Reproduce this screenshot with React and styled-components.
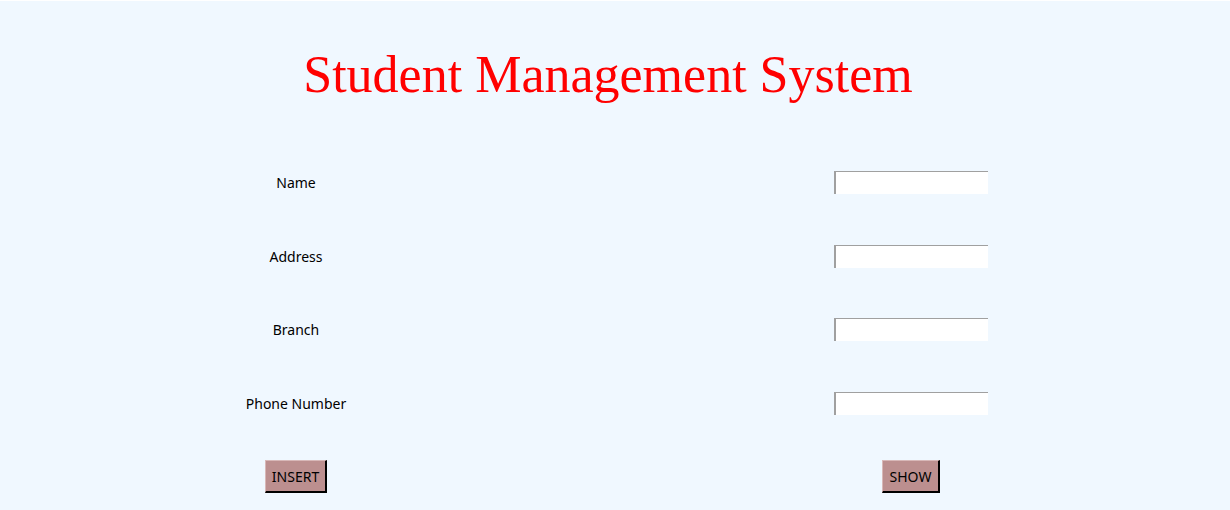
import React from "react";
import styled, { createGlobalStyle } from "styled-components";

const Global = createGlobalStyle`
  html, body {
    margin: 0;
    padding: 0;
    background: #f0f8ff;
  }
`;

const Window = styled.div`
  width: 1230px;
  height: 510px;
  background: #f0f8ff;
  font-family: "Noto Sans", "Open Sans", sans-serif;
  box-sizing: border-box;
  border-top: 1px solid #ffffff;
`;

const Title = styled.h1`
  margin: 0;
  height: 145px;
  padding-top: 44px;
  box-sizing: border-box;
  text-align: center;
  padding-right: 14px;
  font-family: "Liberation Serif", "DejaVu Serif", serif;
  font-weight: normal;
  font-size: 52px;
  line-height: 60px;
  color: #ff0000;
`;

const Form = styled.div`
  display: grid;
  grid-template-columns: 592px 638px;
  grid-auto-rows: 73.5px;
  align-items: center;
  justify-items: center;
`;

const Label = styled.div`
  font-size: 14px;
  color: #000;
`;

const Entry = styled.input`
  width: 154px;
  height: 23px;
  box-sizing: border-box;
  background: #fff;
  border: none;
  border-top: 1px solid #a0a0a0;
  border-left: 2px solid #a0a0a0;
  outline: none;
  padding: 0 2px;
  font: inherit;
`;

const Button = styled.button`
  width: ${(p) => p.$w}px;
  height: 33px;
  box-sizing: border-box;
  background: #bc8f8f;
  border: 1px solid #d8b8b8;
  border-right: 2px solid #000;
  border-bottom: 2px solid #000;
  font-family: "Noto Sans", "Open Sans", sans-serif;
  font-size: 14px;
  color: #000;
  padding: 0;
`;

const fields = ["Name", "Address", "Branch", "Phone Number"];

export default function App() {
  return (
    <Window>
      <Global />
      <Title>Student Management System</Title>
      <Form>
        {fields.map((f) => (
          <React.Fragment key={f}>
            <Label>{f}</Label>
            <Entry type="text" />
          </React.Fragment>
        ))}
        <Button $w={62}>INSERT</Button>
        <Button $w={58}>SHOW</Button>
      </Form>
    </Window>
  );
}
